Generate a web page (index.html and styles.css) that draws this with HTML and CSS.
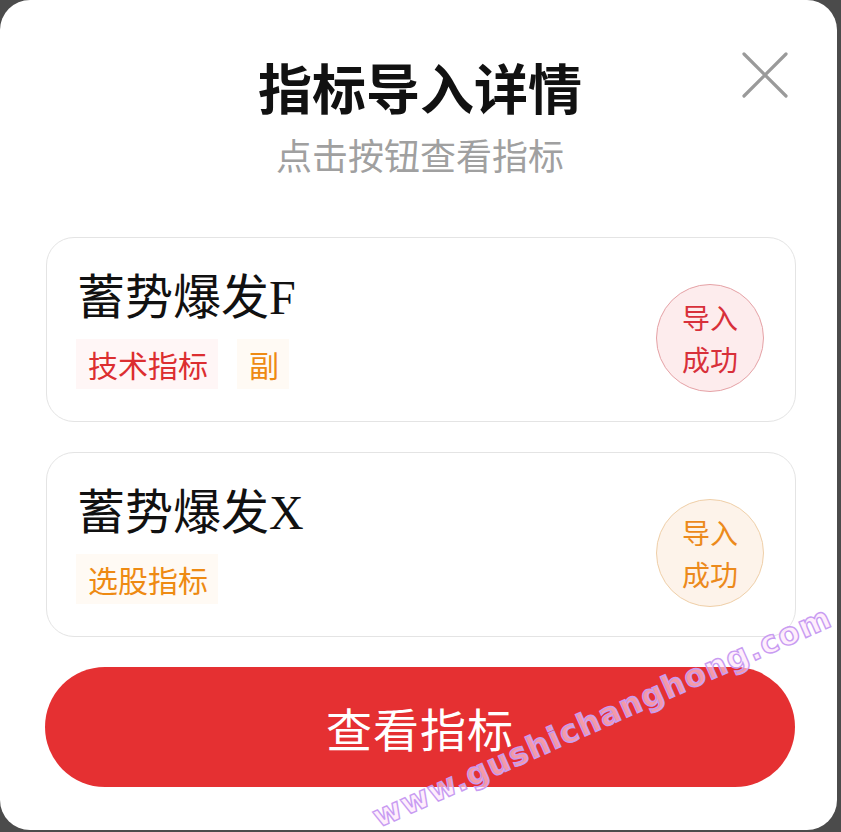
FILE: index.html
```html
<!DOCTYPE html>
<html lang="zh-CN">
<head>
<meta charset="utf-8">
<title>指标导入详情</title>
<link rel="stylesheet" href="styles.css">
</head>
<body>
<div class="modal">
  <button class="close" aria-label="关闭">
    <svg width="46" height="46" viewBox="0 0 46 46"><path d="M2 2 L44 44 M44 2 L2 44" stroke="#9a9a9a" stroke-width="3.2" stroke-linecap="round" fill="none"/></svg>
  </button>
  <h1 class="title">指标导入详情</h1>
  <p class="subtitle">点击按钮查看指标</p>

  <div class="list">
    <div class="card">
      <div class="card-main">
        <div class="card-title">蓄势爆发F</div>
        <div class="tags">
          <span class="tag tag-red">技术指标</span>
          <span class="tag tag-orange">副</span>
        </div>
      </div>
      <div class="badge badge-red">导入<br>成功</div>
    </div>
    <div class="card">
      <div class="card-main">
        <div class="card-title">蓄势爆发X</div>
        <div class="tags">
          <span class="tag tag-orange">选股指标</span>
        </div>
      </div>
      <div class="badge badge-orange">导入<br>成功</div>
    </div>
  </div>

  <button class="primary">查看指标</button>

  <div class="watermark">www.gushichanghong.com</div>
</div>
</body>
</html>
```
FILE: styles.css
```css
* { box-sizing: border-box; }
html, body { margin: 0; padding: 0; }
body {
  width: 841px;
  height: 832px;
  background: #4b4b4b;
  overflow: hidden;
  font-family: "Noto Sans CJK SC", "Noto Sans", sans-serif;
}
.modal {
  position: relative;
  width: 837px;
  height: 830px;
  background: #fff;
  border-radius: 30px;
  padding: 56px 42px 0 45px;
}
.close {
  position: absolute;
  top: 52px;
  left: 742px;
  width: 46px;
  height: 46px;
  padding: 0;
  border: 0;
  background: none;
}
.title {
  margin: 0;
  text-align: center;
  font-size: 54px;
  line-height: 62px;
  font-weight: 700;
  color: #111;
}
.subtitle {
  margin: 16px 0 0;
  text-align: center;
  font-size: 36px;
  line-height: 40px;
  color: #a0a0a0;
}
.list {
  margin-top: 63px;
  display: flex;
  flex-direction: column;
  gap: 30px;
}
.card {
  width: 750px;
  margin-left: 1px;
  border: 1px solid #e4e4e4;
  border-radius: 28px;
  padding: 32px 31px 32px 29px;
  display: flex;
  align-items: center;
  justify-content: space-between;
}
.card-title {
  font-family: "Liberation Serif", "Noto Sans CJK SC", serif;
  font-size: 48px;
  line-height: 56px;
  color: #111;
  padding-left: 1px;
}
.tags {
  margin-top: 13px;
  display: flex;
  gap: 19px;
}
.tag {
  font-size: 30px;
  line-height: 50px;
  padding: 0 10px 0 12px;
}
.tag-red { color: #dc2e30; background: #fff6f6; }
.tag-orange { color: #ee8a12; background: #fffaf4; }
.badge {
  width: 108px;
  height: 108px;
  border-radius: 50%;
  margin: 8px 0 -8px;
  display: flex;
  align-items: center;
  justify-content: center;
  text-align: center;
  font-size: 28px;
  line-height: 42px;
}
.badge-red { background: #fdeced; border: 1px solid #e5a2a6; color: #d8303a; }
.badge-orange { background: #fdf3ea; border: 1px solid #efcfa8; color: #ec8a1c; }
.primary {
  display: block;
  margin-top: 30px;
  width: 750px;
  height: 120px;
  border: 0;
  border-radius: 60px;
  background: #e53032;
  color: #fff;
  font-family: "Noto Sans CJK SC", sans-serif;
  font-size: 46px;
  letter-spacing: 1px;
}
.watermark {
  position: absolute;
  left: 374px;
  top: 800px;
  line-height: 36px;
  transform: rotate(-24deg);
  transform-origin: left center;
  font-family: "DejaVu Sans", sans-serif;
  font-weight: 700;
  font-size: 31px;
  letter-spacing: 1.4px;
  color: rgba(255, 228, 250, 0.6);
  -webkit-text-stroke: 1.4px #c89cf2;
  white-space: nowrap;
  pointer-events: none;
}
```
